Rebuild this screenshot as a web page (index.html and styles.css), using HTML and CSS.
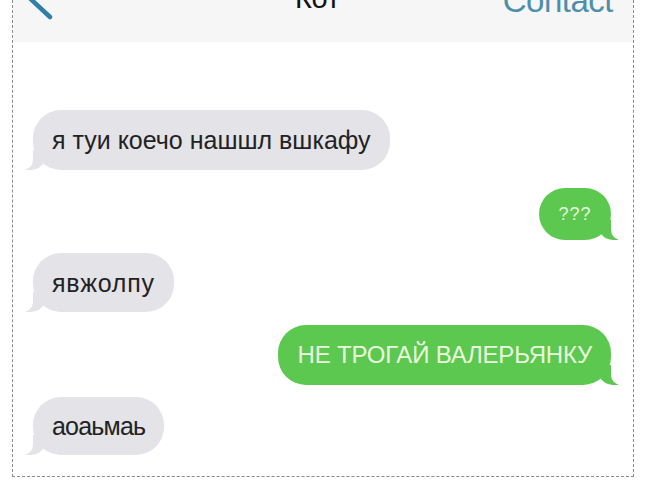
FILE: index.html
```html
<!DOCTYPE html>
<html lang="ru">
<head>
<meta charset="utf-8">
<link rel="stylesheet" href="styles.css">
</head>
<body>
<div class="frame">
  <header class="topbar">
    <svg class="back" width="60" height="42" viewBox="0 0 60 42">
      <path d="M22 -24 L8 -10 L37 17" fill="none" stroke="#2f7fa6" stroke-width="4.5" stroke-linecap="round" stroke-linejoin="round"/>
    </svg>
    <div class="title">Кот</div>
    <div class="contact">Contact</div>
  </header>
  <main class="thread">
    <div class="bubble in b1">я туи коечо нашшл вшкафу</div>
    <div class="bubble out b2">???</div>
    <div class="bubble in b3">явжолпу</div>
    <div class="bubble out b4">НЕ ТРОГАЙ ВАЛЕРЬЯНКУ</div>
    <div class="bubble in b5">аоаьмаь</div>
  </main>
</div>
</body>
</html>
```

FILE: styles.css
```css
html, body {
  margin: 0;
  padding: 0;
  background: #ffffff;
}
body {
  font-family: "Liberation Sans", Arial, sans-serif;
  width: 660px;
  height: 480px;
  overflow: hidden;
}
.frame {
  margin-left: 12px;
  width: 622px;
  height: 477px;
  border-left: 1px dashed #8a8a8a;
  border-right: 1px dashed #8a8a8a;
  border-bottom: 1px dashed #8a8a8a;
  box-sizing: border-box;
  display: flex;
  flex-direction: column;
  overflow: hidden;
}
.topbar {
  height: 42px;
  flex: none;
  background: #f6f6f6;
  display: flex;
  align-items: flex-start;
  overflow: hidden;
}
.back {
  flex: none;
  display: block;
}
.title {
  margin-left: 222px;
  margin-top: -19px;
  font-size: 29px;
  line-height: 34px;
  color: #111111;
  letter-spacing: -0.3px;
}
.contact {
  margin-left: auto;
  margin-right: 20px;
  margin-top: -16px;
  font-size: 33px;
  line-height: 34px;
  color: #4d8fab;
  letter-spacing: -0.5px;
}
.thread {
  display: flex;
  flex-direction: column;
  align-items: flex-start;
  padding: 68px 22px 0 20px;
}
.bubble {
  position: relative;
  border-radius: 28px;
  font-size: 25px;
  line-height: 30px;
  padding: 15px 19px 15px 19px;
  box-sizing: border-box;
}
.bubble.in {
  background: #e3e3e8;
  color: #222222;
}
.bubble.out {
  align-self: flex-end;
  background: #5cc84f;
  color: #e9f9df;
}
.bubble.in::before {
  content: "";
  position: absolute;
  bottom: 0;
  left: -7px;
  width: 20px;
  height: 20px;
  background: #e3e3e8;
  border-bottom-right-radius: 15px;
}
.bubble.in::after {
  content: "";
  position: absolute;
  bottom: 0;
  left: -10px;
  width: 10px;
  height: 20px;
  background: #ffffff;
  border-bottom-right-radius: 10px;
}
.bubble.out::before {
  content: "";
  position: absolute;
  bottom: 0;
  right: -7px;
  width: 20px;
  height: 20px;
  background: #5cc84f;
  border-bottom-left-radius: 15px;
}
.bubble.out::after {
  content: "";
  position: absolute;
  bottom: 0;
  right: -10px;
  width: 10px;
  height: 20px;
  background: #ffffff;
  border-bottom-left-radius: 10px;
}
.b1 {
  height: 60px;
}
.b2 {
  margin-top: 18px;
  height: 52px;
  width: 72px;
  font-size: 18px;
  line-height: 22px;
  padding: 15px 0;
  text-align: center;
  letter-spacing: 1px;
}
.b3 {
  margin-top: 13px;
  height: 59px;
  letter-spacing: 0.8px;
}
.b4 {
  margin-top: 13px;
  height: 60px;
  font-size: 24px;
  letter-spacing: -0.2px;
  padding: 15px 19px 15px 20px;
}
.b5 {
  margin-top: 12px;
  height: 58px;
  padding-top: 14px;
  letter-spacing: -0.8px;
}
```
